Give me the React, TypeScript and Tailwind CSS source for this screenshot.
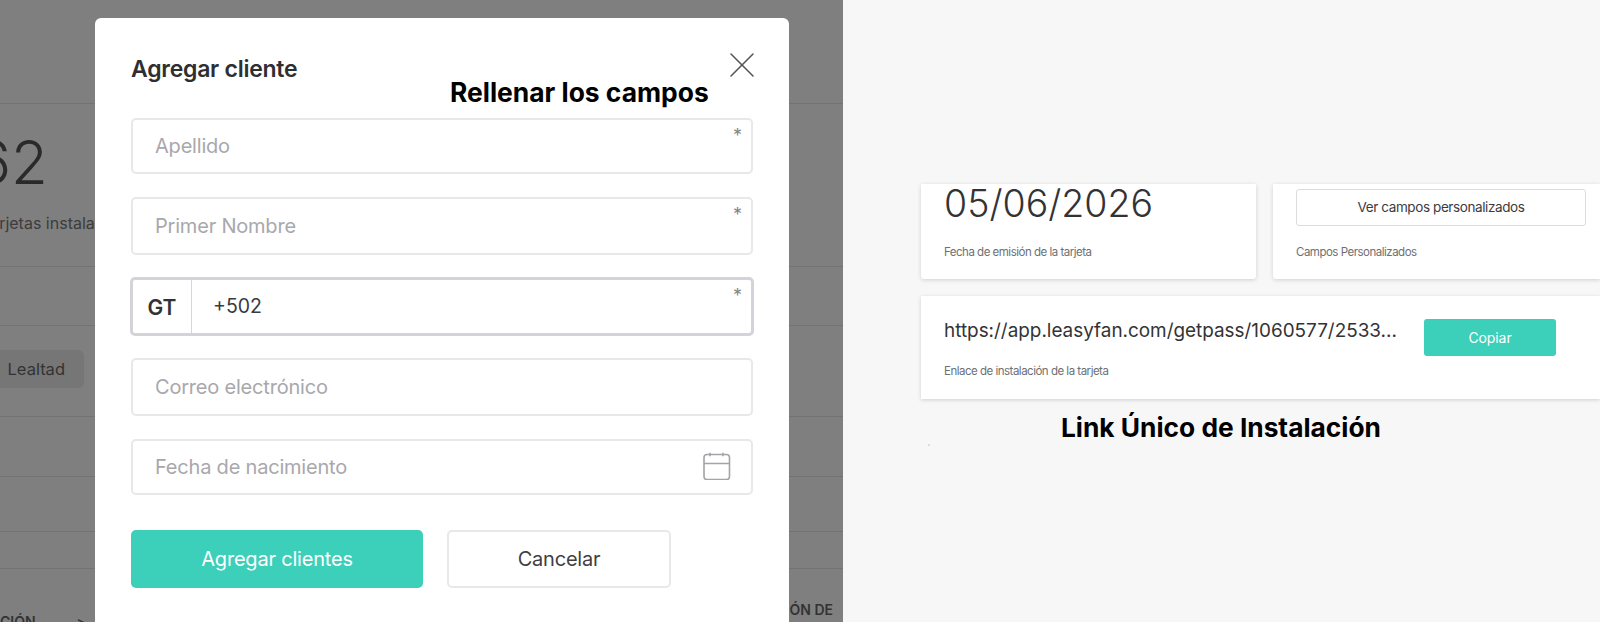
import { X } from "lucide-react";

const inter = "font-['Inter','Liberation_Sans',sans-serif]";

function Field({
  label,
  height,
  required,
  children,
}: {
  label: string;
  height: string;
  required?: boolean;
  children?: React.ReactNode;
}) {
  return (
    <div
      className={`relative flex items-center rounded-[5px] border-2 border-[#e8e8eb] pl-[22px] pr-[20px] ${height}`}
    >
      <span className="flex-1 text-[20px] tracking-[-0.2px] text-[#a8a8ac]">{label}</span>
      {required && <Asterisk />}
      {children}
    </div>
  );
}

function Asterisk() {
  return (
    <span className="absolute right-[9px] top-[5px] text-[18px] leading-[22px] text-[#85858d]">*</span>
  );
}

function CalendarIcon() {
  return (
    <svg
      width="28"
      height="28"
      viewBox="0 0 28 28"
      fill="none"
      stroke="#a3a3a8"
      strokeWidth="1.6"
      className="-mt-[2px]"
    >
      <rect x="1" y="2.5" width="25.5" height="25" rx="3" />
      <path d="M1 11.5h25.5M7 0.8v3.4M20 0.8v3.4" />
    </svg>
  );
}

function Backdrop() {
  return (
    <div className="flex h-full flex-col bg-[#7f7f7f] text-[#303030]">
      <div className="h-[104px] shrink-0 border-b border-[#737373]" />
      <div className="h-[163px] shrink-0 border-b border-[#737373] pt-[22px]">
        <div className="-ml-[25px] text-[60px] font-light leading-[72px] text-[#2a2a2a]">62</div>
        <div className="-ml-[19px] mt-[15px] whitespace-nowrap text-[16px] leading-[20px] text-[#3c3c3c]">
          Tarjetas instaladas
        </div>
      </div>
      <div className="h-[59px] shrink-0 border-b border-[#737373]" />
      <div className="flex h-[91px] shrink-0 items-start border-b border-[#737373] pt-[24px]">
        <div className="flex h-[38px] w-[84px] items-center justify-end rounded-r-[6px] bg-[#767676] pr-[19px] text-[16.5px] text-[#333]">
          Lealtad
        </div>
      </div>
      <div className="h-[60px] shrink-0 border-b border-[#737373]" />
      <div className="h-[55px] shrink-0 border-b border-[#737373]" />
      <div className="h-[37px] shrink-0 border-b border-[#737373]" />
      <div className="flex flex-1 items-start justify-between overflow-hidden pr-[10px] text-[14px] font-semibold text-[#333]">
        <div className="mt-[46px] flex items-center gap-[41px] leading-[14px]">
          <span>CIÓN</span>
          <span>&gt;</span>
        </div>
        <span className="mt-[32px] leading-[18px]">CIÓN DE</span>
      </div>
    </div>
  );
}

function Modal() {
  return (
    <div className="absolute left-[95px] top-[18px] flex h-[620px] w-[694px] flex-col rounded-[6px] bg-white px-[36px]">
      <div className="flex h-[100px] shrink-0 items-start justify-between">
        <h2 className="mt-[34px] text-[23px] font-semibold leading-[34px] tracking-[-0.25px] text-[#2f2f31]">
          Agregar cliente
        </h2>
        <X size={44} strokeWidth={0.85} className="-mr-[11px] mt-[25px] text-[#55555a]" />
      </div>
      <div className="flex flex-col gap-[22px]">
        <div className="flex flex-col gap-[23px]">
          <Field label="Apellido" height="h-[56px]" required />
          <Field label="Primer Nombre" height="h-[58px]" required />
        </div>
        <div className="relative -mx-px flex h-[59px] items-stretch rounded-[5px] border-[3px] border-[#d3d3da]">
          <div className="flex w-[59px] items-center justify-center border-r border-[#d6d6da] pt-[3px] text-[21px] font-semibold text-[#333]">
            GT
          </div>
          <div className="flex flex-1 items-center pl-[21px] text-[19.5px] text-[#3a3a3c]">+502</div>
          <Asterisk />
        </div>
        <Field label="Correo electrónico" height="h-[58px]" />
      </div>
      <div className="mt-[23px]">
        <Field label="Fecha de nacimiento" height="h-[56px]">
          <CalendarIcon />
        </Field>
      </div>
      <div className="mt-[35px] flex gap-[24px]">
        <button className="h-[58px] w-[292px] rounded-[5px] bg-[#3ccfb9] text-[20px] tracking-[-0.2px] text-white">
          Agregar clientes
        </button>
        <button className="h-[58px] w-[224px] rounded-[5px] border-2 border-[#e8e8eb] text-[20px] tracking-[-0.2px] text-[#3f3f42]">
          Cancelar
        </button>
      </div>
      <div className="absolute left-[355px] top-[56px] whitespace-nowrap text-[26.4px] font-bold leading-[36px] text-black">
        Rellenar los campos
      </div>
    </div>
  );
}

function CardLabel({ children }: { children: React.ReactNode }) {
  return <div className="text-[11.5px] leading-[16px] tracking-[-0.5px] text-[#6f6f73]">{children}</div>;
}

function Details() {
  return (
    <div className="flex flex-1 flex-col bg-[#f7f7f7] pl-[78px] pt-[184px]">
      <div className="flex gap-[17px]">
        <div className="h-[95px] w-[335px] rounded-b-[3px] bg-white pl-[23px] shadow-[0_1px_4px_rgba(0,0,0,0.16)]">
          <div className="text-[37.5px] font-light leading-[40px] text-[#333336]">05/06/2026</div>
          <div className="mt-[20px]">
            <CardLabel>Fecha de emisión de la tarjeta</CardLabel>
          </div>
        </div>
        <div className="h-[95px] flex-1 rounded-bl-[3px] bg-white pl-[23px] pr-[14px] pt-[5px] shadow-[0_1px_4px_rgba(0,0,0,0.16)]">
          <button className="h-[37px] w-full rounded-[3px] border border-[#dcdcdf] text-[13.5px] tracking-[-0.4px] text-[#3b3b3e]">
            Ver campos personalizados
          </button>
          <div className="mt-[18px]">
            <CardLabel>Campos Personalizados</CardLabel>
          </div>
        </div>
      </div>
      <div className="mt-[17px] flex h-[103px] items-start bg-white pl-[23px] shadow-[0_1px_4px_rgba(0,0,0,0.16)]">
        <div className="w-[480px] pt-[23px]">
          <div className="whitespace-nowrap text-[18.9px] leading-[24px] text-[#333336]">
            https://app.leasyfan.com/getpass/1060577/2533...
          </div>
          <div className="mt-[20px]">
            <CardLabel>Enlace de instalación de la tarjeta</CardLabel>
          </div>
        </div>
        <button className="mt-[23px] h-[37px] w-[132px] rounded-[3px] bg-[#3ccfb9] text-[14px] tracking-[-0.1px] text-white">
          Copiar
        </button>
      </div>
      <div className="mt-[11px] pl-[140px] text-[26.3px] font-bold leading-[36px] text-black">
        Link Único de Instalación
      </div>
      <div className="-mt-[2px] ml-[7px] size-[2px] rounded-full bg-[#d4d4d4]" />
    </div>
  );
}

export default function App() {
  return (
    <div className={`flex h-[622px] w-[1600px] overflow-hidden ${inter}`}>
      <div className="relative w-[843px] shrink-0 overflow-hidden">
        <Backdrop />
        <Modal />
      </div>
      <Details />
    </div>
  );
}
